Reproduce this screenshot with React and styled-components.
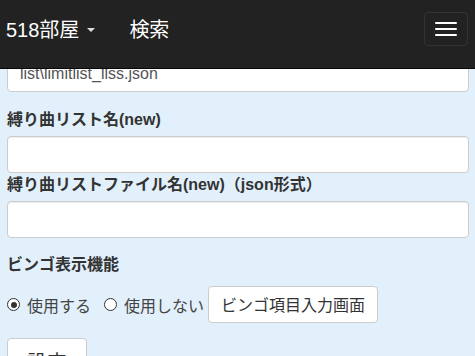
import React from 'react'
import styled, { createGlobalStyle } from 'styled-components'

const GlobalStyle = createGlobalStyle`
  html, body {
    margin: 0;
    padding: 0;
    background: #e2f0fb;
    font-family: "Liberation Sans", Arial, "Noto Sans CJK JP", sans-serif;
    font-size: 16px;
    color: #333;
  }
  * { box-sizing: border-box; }
`

export default function App() {
    return (
        <Page>
            <GlobalStyle />
            <Navbar>
                <Brand>518部屋<Caret /></Brand>
                <NavLink>検索</NavLink>
                <Toggle aria-label="menu">
                    <Bar /><Bar /><Bar />
                </Toggle>
            </Navbar>
            <Viewport>
                <Form>
                    <TextInput defaultValue="list\limitlist_llss.json" offset={-14} />
                    <Label gap={16}>縛り曲リスト名(new)</Label>
                    <TextInput />
                    <Label>縛り曲リストファイル名(new)（json形式）</Label>
                    <TextInput />
                    <Label gap={15}>ビンゴ表示機能</Label>
                    <RadioRow>
                        <RadioLabel><Radio checked />使用する</RadioLabel>
                        <RadioLabel><Radio />使用しない</RadioLabel>
                        <Button>ビンゴ項目入力画面</Button>
                    </RadioRow>
                    <SubmitButton>設定</SubmitButton>
                </Form>
            </Viewport>
        </Page>
    )
}

const Page = styled.div`
    width: 475px;
    height: 356px;
    overflow: hidden;
    display: flex;
    flex-direction: column;
`;

const Navbar = styled.nav`
    flex: none;
    height: 69px;
    background: #222;
    border-bottom: 1px solid #080808;
    display: flex;
    align-items: flex-start;
    padding: 12px 7px 0 6px;
    position: relative;
    z-index: 1;
`;

const Brand = styled.div`
    display: flex;
    align-items: center;
    height: 33px;
    font-size: 20px;
    color: #fff;
    font-family: "Liberation Sans", "Noto Sans CJK JP", sans-serif;
`;

const Caret = styled.span`
    display: inline-block;
    margin-left: 8px;
    margin-top: 3px;
    width: 0;
    height: 0;
    border-top: 4px solid #ddd;
    border-left: 4px solid transparent;
    border-right: 4px solid transparent;
`;

const NavLink = styled.div`
    height: 33px;
    line-height: 33px;
    margin-left: 34px;
    font-size: 20px;
    color: #fff;
    font-family: "Noto Sans CJK JP", sans-serif;
`;

const Toggle = styled.button`
    margin-left: auto;
    width: 44px;
    height: 34px;
    background: transparent;
    border: 1px solid #333;
    border-radius: 4px;
    display: flex;
    flex-direction: column;
    align-items: center;
    justify-content: center;
    gap: 4px;
    padding: 0;
`;

const Bar = styled.span`
    display: block;
    width: 22px;
    height: 2px;
    border-radius: 1px;
    background: #fff;
`;

const Viewport = styled.main`
    flex: 1;
    overflow: hidden;
`;

const Form = styled.div`
    padding: 0 6px 0 7px;
    display: flex;
    flex-direction: column;
    align-items: flex-start;
`;

const TextInput = styled.input`
    display: block;
    width: 100%;
    height: 37px;
    margin-top: ${p => p.offset || 0}px;
    padding: 6px 12px;
    font-size: 16px;
    font-family: "Liberation Sans", Arial, sans-serif;
    color: #555;
    background: #fff;
    border: 1px solid #ccc;
    border-radius: 4px;
    box-shadow: inset 0 1px 1px rgba(0,0,0,.075);
    outline: none;
`;

const Label = styled.label`
    display: block;
    margin-top: ${p => p.gap || 0}px;
    margin-bottom: 5px;
    line-height: 23px;
    font-weight: bold;
    font-size: 16px;
    color: #333;
    font-family: "Liberation Sans", "Noto Sans CJK JP", sans-serif;
`;

const RadioRow = styled.div`
    margin-top: 5px;
    display: flex;
    align-items: center;
`;

const RadioLabel = styled.label`
    display: flex;
    align-items: center;
    gap: 7px;
    margin-right: 13px;
    font-size: 16px;
    color: #444;
    font-family: "Noto Sans CJK JP", sans-serif;
    &:last-of-type { margin-right: 4px; }
`;

const Radio = styled.span`
    width: 13px;
    height: 13px;
    border-radius: 50%;
    border: 1.5px solid #333;
    background: #fff;
    display: flex;
    align-items: center;
    justify-content: center;
    &::after {
        content: '';
        width: 6px;
        height: 6px;
        border-radius: 50%;
        background: ${p => p.checked ? '#333' : 'transparent'};
    }
`;

const Button = styled.button`
    height: 37px;
    padding: 6px 12px;
    font-size: 16px;
    line-height: 23px;
    color: #333;
    font-family: "Noto Sans CJK JP", sans-serif;
    background: #fff;
    border: 1px solid #ccc;
    border-radius: 4px;
`;

const SubmitButton = styled(Button)`
    margin-top: 15px;
    height: 48px;
    padding: 10px 19px;
    font-size: 20px;
    line-height: 26px;
`;
